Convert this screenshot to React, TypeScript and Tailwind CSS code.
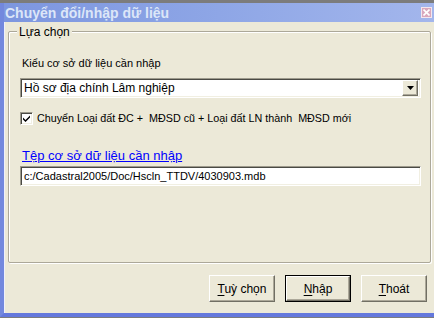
import React from 'react';

const sunken =
  'border-t border-l border-b border-r border-t-[#9d9a8c] border-l-[#9d9a8c] border-b-white border-r-white shadow-[inset_1px_1px_0_#4a4a44,inset_-1px_-1px_0_#f1efe2]';

const raised =
  'border-t border-l border-b border-r border-t-white border-l-white border-b-[#716f64] border-r-[#716f64] shadow-[inset_-1px_-1px_0_#aca899]';

function DialogButton({ mnemonic, rest, isDefault }: { mnemonic: string; rest: string; isDefault?: boolean }) {
  const face = (
    <div className={`flex-1 flex items-center justify-center bg-[#ece9d8] ${raised}`}>
      <span className="text-[12px] text-black leading-none">
        <span className="underline underline-offset-2">{mnemonic}</span>
        {rest}
      </span>
    </div>
  );
  return (
    <div className={`w-[66px] h-[27px] flex ${isDefault ? 'border border-black' : ''}`}>{face}</div>
  );
}

export default function App() {
  return (
    <div
      className="w-[434px] h-[318px] bg-[#7c7c7c] overflow-hidden flex flex-col pt-[3px] pb-px"
      style={{ fontFamily: '"Liberation Sans", Arial, sans-serif' }}
    >
      <div className="flex-1 flex flex-col border-l-4 border-b-4 border-l-[#7388de] border-b-[#6478dc]">
        {/* title bar */}
        <div className="h-[19px] flex items-center justify-between bg-linear-to-r from-[#7d96df] via-[#8ea6e6] to-[#a3b6ec] pl-px pr-[2px]">
          <span className="text-[14px] font-bold text-[#dce6f8] leading-none">
            Chuyển đổi/nhập dữ liệu
          </span>
          <div className="w-[11px] h-[11px] bg-[#d9a8bd] border border-[#f4e6ee] flex items-center justify-center">
            <svg width="7" height="7" viewBox="0 0 7 7">
              <path d="M0.5 0.5 L6.5 6.5 M6.5 0.5 L0.5 6.5" stroke="#ffffff" strokeWidth="1.6" />
            </svg>
          </div>
        </div>

        {/* client area */}
        <div className="flex-1 flex flex-col bg-[#ece9d8] border-l border-l-[#eef0fb]">
          {/* group box */}
          <div className="relative ml-[3px] mt-[9px] w-[423px] h-[232px] border border-[#aca899] rounded-[2px] shadow-[inset_1px_1px_0_#ffffff,1px_1px_0_#ffffff] pl-[11px] pt-[24px]">
            <span className="absolute left-[8px] top-[-7px] bg-[#ece9d8] px-[2px] text-[12px] leading-[14px] text-black">
              Lựa chọn
            </span>

            <div className="pl-[2px] text-[11px] leading-[14px] text-black">Kiểu cơ sở dữ liệu cần nhập</div>

            {/* combo */}
            <div className={`mt-[8px] w-[401px] h-[20px] bg-white flex items-center pl-[3px] pr-[2px] ${sunken}`}>
              <span className="flex-1 text-[12px] leading-none text-black">Hồ sơ địa chính Lâm nghiệp</span>
              <div className={`w-[16px] h-[16px] bg-[#ece9d8] flex items-center justify-center ${raised}`}>
                <svg width="7" height="4" viewBox="0 0 7 4">
                  <path d="M0 0 H7 L3.5 4 Z" fill="#000000" />
                </svg>
              </div>
            </div>

            {/* checkbox */}
            <div className="mt-[13px] flex items-center gap-[4px]">
              <div className={`w-[13px] h-[13px] bg-white flex items-center justify-center ${sunken}`}>
                <svg width="7" height="7" viewBox="0 0 7 7">
                  <path d="M0 2.5 L2.5 5 L7 0.5 L7 2.5 L2.5 7 L0 4.5 Z" fill="#000000" />
                </svg>
              </div>
              <span className="text-[10.75px] leading-[14px] text-black whitespace-pre">
                Chuyển Loại đất ĐC +  MĐSD cũ + Loại đất LN thành  MĐSD mới
              </span>
            </div>

            <div className="mt-[24px] pl-[2px] text-[13px] leading-[14px] text-[#0000ff] underline underline-offset-1">
              Tệp cơ sở dữ liệu cần nhập
            </div>

            {/* text box */}
            <div className={`mt-[3px] w-[401px] h-[20px] bg-white flex items-center pl-[3px] ${sunken}`}>
              <span className="text-[11px] leading-none text-black">c:/Cadastral2005/Doc/Hscln_TTDV/4030903.mdb</span>
            </div>
          </div>

          {/* buttons */}
          <div className="mt-[12px] flex justify-end gap-[10px] pr-[7px]">
            <DialogButton mnemonic="T" rest="uỳ chọn" />
            <DialogButton mnemonic="N" rest="hập" isDefault />
            <DialogButton mnemonic="T" rest="hoát" />
          </div>
        </div>
      </div>
    </div>
  );
}
